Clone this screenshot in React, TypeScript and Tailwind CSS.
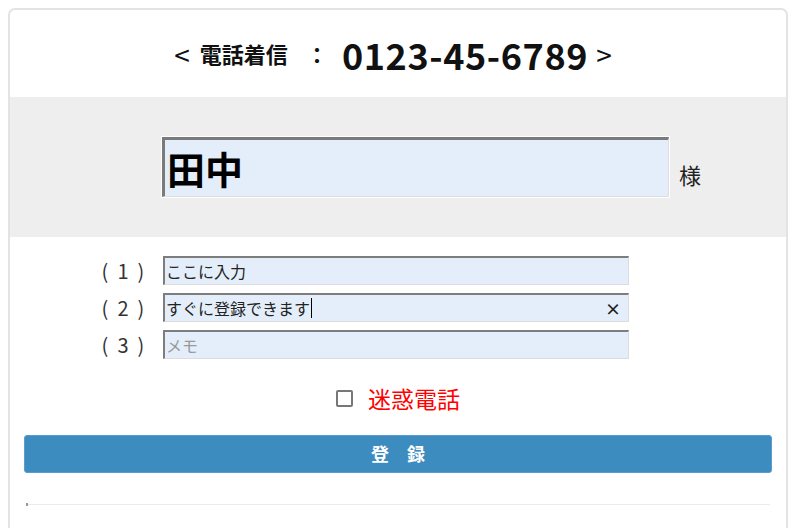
import React from 'react';

const jp = { fontFamily: '"Noto Sans CJK JP", "Noto Sans", sans-serif' };

function Field({ n, children }: { n: string; children: React.ReactNode }) {
  return (
    <div className="flex items-center h-[29px]">
      <span className="w-[63px] flex text-[20px] text-[#333] leading-none -ml-[2px] mr-[2px]">
        <span className="w-[14px] text-center">(</span>
        <span className="w-[22px] text-center">{n}</span>
        <span className="w-[14px] text-center">)</span>
      </span>
      <div className="relative flex items-center w-[466px] h-[29px] bg-[#e4eefa] border-t-2 border-l-2 border-[#7d7d7d] border-r border-b border-r-[#dcdcdc] border-b-[#dcdcdc] pl-[1px] text-[16px] text-[#222]">
        {children}
      </div>
    </div>
  );
}

export default function App() {
  return (
    <div className="bg-white w-[802px] h-[528px] overflow-hidden pt-2 pl-2" style={jp}>
      <div className="w-[780px] h-[540px] border-2 border-[#e3e3e3] rounded-[7px] overflow-hidden">
        {/* header */}
        <div className="h-[87px] flex items-center justify-center pr-[10px] font-bold text-[#111]">
          <span className="text-[28px] font-normal mr-[10px]">&lt;</span>
          <span className="text-[22px]">電話着信</span>
          <span className="text-[22px] ml-[18px] mr-[14px]">：</span>
          <span className="text-[36px] tracking-[0.6px] leading-none">0123-45-6789</span>
          <span className="text-[28px] font-normal ml-[8px]">&gt;</span>
        </div>

        {/* name */}
        <div className="bg-[#eeeeee] h-[140px] flex items-center pl-[152px]">
          <div className="w-[507px] h-[60px] bg-[#e4eefa] border-t-[3px] border-l-[3px] border-[#7a7a7a] border-r border-b border-r-[#dedede] border-b-[#dedede] outline outline-1 outline-white flex items-center pl-[2px] text-[38px] font-bold text-black leading-none">
            田中
          </div>
          <span className="ml-[10px] mt-[14px] text-[22px] text-[#222]">様</span>
        </div>

        {/* fields */}
        <div className="pl-[90px] pt-[19px] flex flex-col gap-[8px]">
          <Field n="1">ここに入力</Field>
          <Field n="2">
            すぐに登録できます<span className="inline-block w-px h-[20px] bg-black ml-[1px]" />
            <span className="absolute right-[7px] text-[16px] font-bold text-[#222]">×</span>
          </Field>
          <Field n="3"><span className="text-[#999]">メモ</span></Field>
        </div>

        {/* checkbox */}
        <div className="flex items-center justify-center mt-[22px]">
          <span className="w-[17px] h-[17px] border-2 border-[#777] rounded-[2px] bg-white" />
          <span className="ml-[15px] text-[23px] text-[#ff0000]">迷惑電話</span>
        </div>

        {/* button */}
        <div className="px-[14px] mt-[19px]">
          <div className="h-[38px] bg-[#3d8cbf] rounded-[3px] border border-[#5a9dcb] flex items-center justify-center text-white font-bold text-[18px] tracking-[18px] pl-[18px]">
            登録
          </div>
        </div>

        {/* divider */}
        <div className="px-[16px] mt-[31px]">
          <div className="relative h-px bg-[#ececec]">
            <span className="absolute left-0 -top-px w-[2px] h-[3px] bg-[#999]" />
          </div>
        </div>
      </div>
    </div>
  );
}
